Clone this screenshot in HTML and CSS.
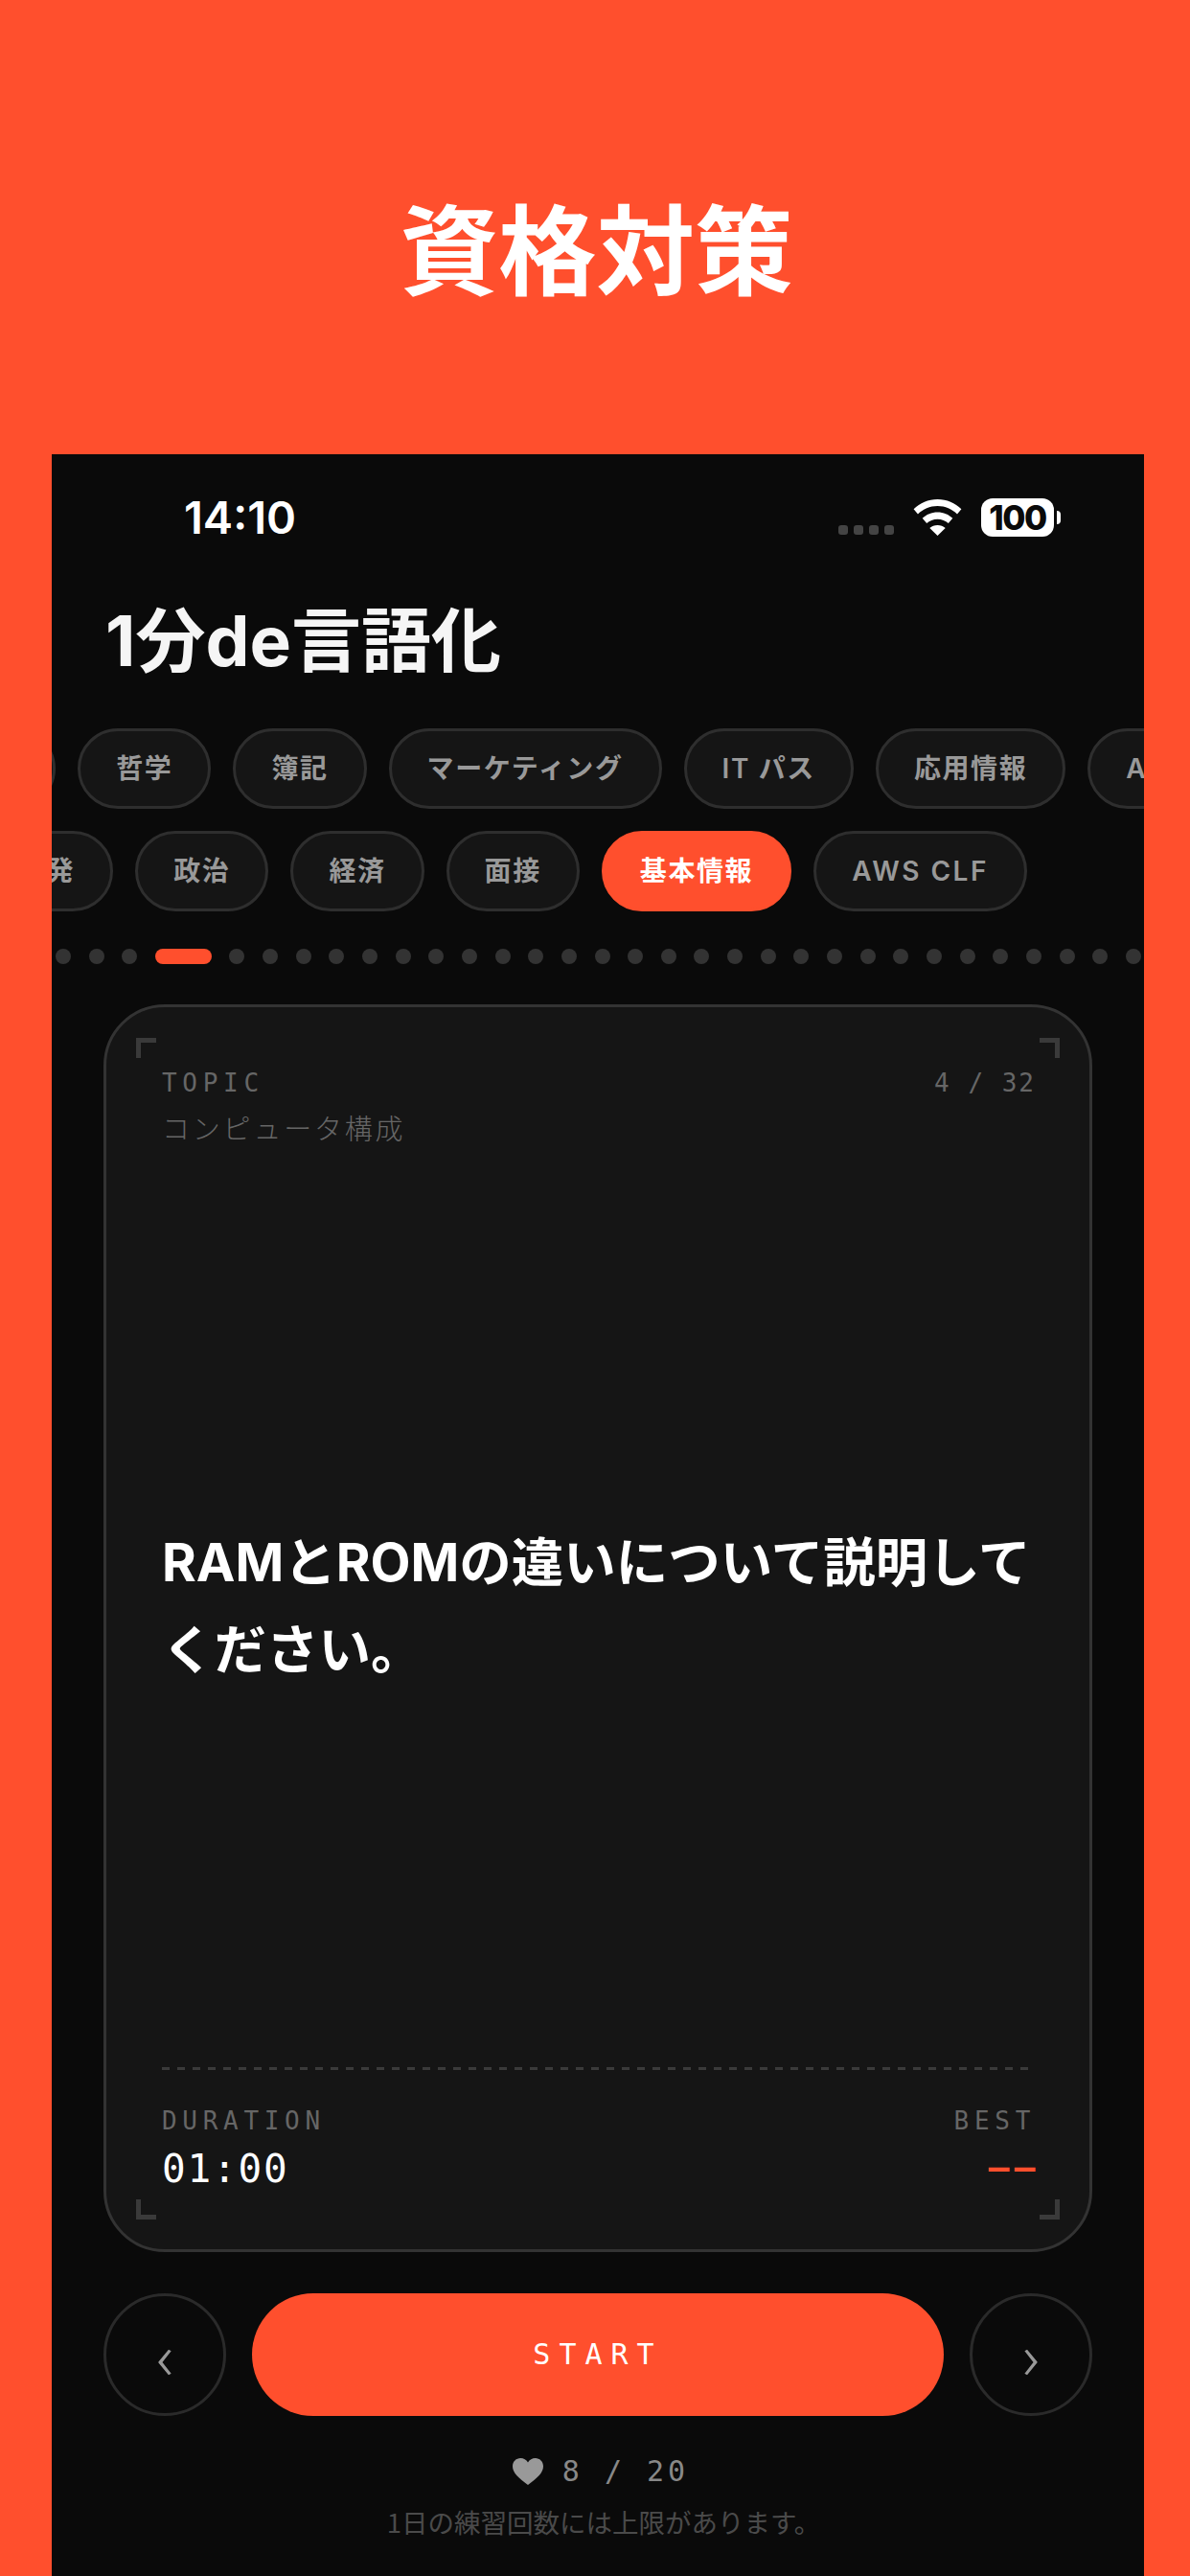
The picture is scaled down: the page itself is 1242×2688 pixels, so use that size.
FILE: index.html
```html
<!DOCTYPE html>
<html lang="ja">
<head>
<meta charset="utf-8">
<title>資格対策</title>
<link rel="stylesheet" href="styles.css">
</head>
<body>
<header class="banner"><h1 class="banner-title">資格対策</h1></header>
<main class="phone">
  <div class="status">
    <span class="time">14:10</span>
    <div class="status-icons">
      <div class="signal"><i></i><i></i><i></i><i></i></div>
      <svg class="wifi" viewBox="0 0 51 38" aria-hidden="true"><path d="M25.5 0C15.8 0 7.2 3.8 0.6 10.2L5 15.4C10.4 10.2 17.5 7 25.5 7s15.1 3.200 20.500 8.400l4.400-5.200C43.800 3.800 35.200 0 25.500 0zM25.500 13.500c-6.200 0-11.600 2.400-15.800 6.300l4.500 5.300c3-2.700 6.900-4.400 11.300-4.400s8.300 1.700 11.300 4.400l4.500-5.300c-4.200-3.900-9.600-6.300-15.800-6.300zM25.500 27c-3.200 0-6 1.200-8.200 3.100L25.500 38l8.200-7.900C31.500 28.200 28.700 27 25.500 27z"/></svg>
      <div class="battery"><span class="battery-level">100</span></div>
      <span class="battery-nub"></span>
    </div>
  </div>
  <h2 class="app-title">1分de言語化</h2>
  <div class="chips-row chips-row-first">
    <div class="chips chips-a">
      <span class="chip">歴史</span>
      <span class="chip">哲学</span>
      <span class="chip">簿記</span>
      <span class="chip">マーケティング</span>
      <span class="chip">IT パス</span>
      <span class="chip">応用情報</span>
      <span class="chip">AWS SAA</span>
    </div>
  </div>
  <div class="chips-row">
    <div class="chips chips-b">
      <span class="chip">開発</span>
      <span class="chip">政治</span>
      <span class="chip">経済</span>
      <span class="chip">面接</span>
      <span class="chip chip-on">基本情報</span>
      <span class="chip chip-latin">AWS CLF</span>
    </div>
  </div>
  <div class="pager">
    <i></i><i></i><i></i><i class="pager-on"></i>
    <i></i><i></i><i></i><i></i><i></i><i></i><i></i><i></i><i></i><i></i><i></i><i></i><i></i><i></i><i></i><i></i><i></i><i></i><i></i><i></i><i></i><i></i><i></i><i></i><i></i><i></i><i></i><i></i>
  </div>
  <section class="card">
    <span class="mark mark-tl"></span><span class="mark mark-tr"></span>
    <span class="mark mark-bl"></span><span class="mark mark-br"></span>
    <div class="card-head">
      <div>
        <div class="label">TOPIC</div>
        <div class="topic">コンピュータ構成</div>
      </div>
      <div class="count">4 / 32</div>
    </div>
    <div class="question-wrap">
      <p class="question">RAMとROMの違いについて説明してください。</p>
    </div>
    <div class="rule"></div>
    <div class="card-foot">
      <div>
        <div class="label">DURATION</div>
        <div class="duration">01:00</div>
      </div>
      <div class="foot-right">
        <div class="label">BEST</div>
        <div class="best">––</div>
      </div>
    </div>
  </section>
  <div class="actions">
    <button class="round">‹</button>
    <button class="start">START</button>
    <button class="round">›</button>
  </div>
  <div class="lives">
    <svg class="heart" viewBox="0 0 32 28" aria-hidden="true"><path d="M16 28C6 20.500 0 15.200 0 8.500 0 3.500 3.800 0 8.300 0c3.200 0 6 1.600 7.700 4.400C17.700 1.600 20.500 0 23.700 0 28.200 0 32 3.500 32 8.500 32 15.200 26 20.500 16 28z"/></svg>
    <span class="lives-text">8 / 20</span>
  </div>
  <p class="note">1日の練習回数には上限があります。</p>
</main>
</body>
</html>
```
FILE: styles.css
```css
* { box-sizing: border-box; }
html, body { margin: 0; padding: 0; }
body {
  width: 1242px;
  height: 2688px;
  overflow: hidden;
  background: #ff4f2d;
  font-family: Inter, "Noto Sans CJK JP", sans-serif;
}
.banner {
  height: 474px;
  display: flex;
  align-items: center;
  justify-content: center;
  padding: 36px 0 0 3px;
}
.banner-title {
  margin: 0;
  color: #fff;
  font: 700 102.500px/1.2 "Noto Sans CJK JP", sans-serif;
}
.phone {
  margin: 0 48px 0 54px;
  height: 2214px;
  background: #0a0a0a;
  overflow: hidden;
  display: flex;
  flex-direction: column;
}
.status {
  height: 60px;
  margin-top: 36px;
  padding: 0 87px 0 138px;
  display: flex;
  align-items: center;
  justify-content: space-between;
  color: #fff;
}
.time { font-size: 47px; font-weight: 600; line-height: 60px; }
.status-icons { display: flex; align-items: center; }
.signal { display: flex; gap: 6px; margin-right: 20px; align-self: flex-end; padding-bottom: 2px; }
.signal i { width: 10px; height: 10px; border-radius: 3px; background: #444; display: block; }
.wifi { width: 51px; height: 38px; fill: #fff; margin-right: 20px; }
.battery {
  width: 76px; height: 40px; border-radius: 12px; background: #fff;
  display: flex; align-items: center; justify-content: center;
}
.battery-level { color: #0a0a0a; font-size: 35px; font-weight: 800; letter-spacing: -1.500px; line-height: 40px; }
.battery-nub { width: 4px; height: 14px; margin-left: 3px; background: #fff; border-radius: 0 8px 8px 0; }
.app-title {
  margin: 54px 0 0 56px;
  color: #f5f5f5;
  font-size: 73px;
  font-weight: 700;
  line-height: 90px;
}
.chips-row { height: 84px; margin-top: 23px; overflow: hidden; flex: none; }
.chips-row-first { margin-top: 46px; }
.chips { display: flex; gap: 23px; height: 84px; }
.chips-a { margin-left: -135px; }
.chips-b { margin-left: -75px; }
.chip {
  flex: none;
  height: 84px;
  padding: 0 37px;
  border: 3px solid #2e2e2e;
  border-radius: 42px;
  background: #151515;
  color: #999;
  font-size: 28px;
  font-weight: 600;
  letter-spacing: 1.600px;
  line-height: 78px;
}
.chip-latin { letter-spacing: 2.500px; }
.chip-on { background: #ff4f2d; border-color: #ff4f2d; color: #fff; font-weight: 700; }
.pager { display: flex; gap: 18.670px; margin: 39px 0 0 4px; height: 16px; flex: none; }
.pager i { flex: none; display: block; width: 16px; height: 16px; border-radius: 50%; background: #333; }
.pager i.pager-on { width: 58.670px; border-radius: 8px; background: #ff4f2d; }
.card {
  position: relative;
  flex: none;
  margin: 42px 54px 0;
  height: 1302px;
  border: 3px solid #333;
  border-radius: 64px;
  background: #151515;
  padding: 62px 58px 58px;
  display: flex;
  flex-direction: column;
}
.mark { position: absolute; width: 21px; height: 21px; border: 0 solid #3a3a3a; }
.mark-tl { left: 31px; top: 32px; border-width: 5px 0 0 5px; }
.mark-tr { right: 31px; top: 32px; border-width: 5px 5px 0 0; }
.mark-bl { left: 31px; bottom: 31px; border-width: 0 0 5px 5px; }
.mark-br { right: 31px; bottom: 31px; border-width: 0 5px 5px 0; }
.card-head { display: flex; justify-content: space-between; }
.label {
  font: 400 26px/34px "DejaVu Sans Mono", monospace;
  letter-spacing: 5.700px;
  color: #666;
}
.topic {
  margin-top: 11px;
  font: 300 29px/36px "Noto Sans CJK JP", sans-serif;
  letter-spacing: 2.800px;
  color: #666;
}
.count { font: 400 26px/34px "DejaVu Sans Mono", monospace; letter-spacing: 2px; color: #666; margin-right: -2px; }
.question-wrap { flex: 1; display: flex; align-items: center; }
.question {
  margin: 0;
  color: #fff;
  font-size: 54.500px;
  font-weight: 700;
  line-height: 91px;
}
.rule {
  height: 3px;
  background: repeating-linear-gradient(90deg, #3a3a3a 0 8px, transparent 8px 16px);
}
.card-foot {
  padding-top: 36px;
  display: flex;
  justify-content: space-between;
}
.foot-right { text-align: right; margin-right: -2px; }
.duration { margin-top: 7px; font: 400 41px/52px "DejaVu Sans Mono", monospace; letter-spacing: 1.800px; color: #fff; }
.best { margin: 6px -5px 0 0; font: 700 36px/52px "DejaVu Sans Mono", monospace; letter-spacing: 5.500px; color: #ff4f2d; }
.actions { display: flex; gap: 27px; margin: 43px 54px 0; height: 128px; flex: none; }
.round {
  flex: none; width: 128px; height: 128px; border-radius: 50%;
  border: 3px solid #2a2a2a; background: transparent; color: #999; padding: 0;
  font: 300 66px/108px "Noto Sans", sans-serif;
}
.start {
  flex: 1; border: 0; border-radius: 64px; background: #ff4f2d; color: #fff; padding: 0;
  font: 400 30px/1 "DejaVu Sans Mono", monospace; letter-spacing: 9px;
}
.lives { display: flex; justify-content: center; align-items: center; gap: 20px; margin-top: 40px; padding-left: 6px; height: 36px; flex: none; }
.heart { width: 32px; height: 28px; fill: #999; }
.lives-text { font: 400 30px/36px "DejaVu Sans Mono", monospace; letter-spacing: 4px; color: #888; }
.note { margin: 16px 0 0; padding-left: 12px; text-align: center; color: #4a4a4a; font: 400 27.500px/36px "Noto Sans CJK JP", sans-serif; }
```
